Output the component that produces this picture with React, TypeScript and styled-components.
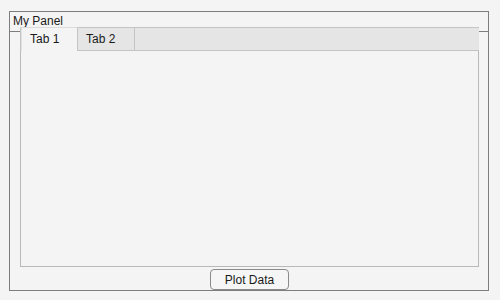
import React, {useState} from "react";
import styled, {createGlobalStyle} from "styled-components";

const GlobalStyle = createGlobalStyle`
    html, body {
        margin: 0;
        padding: 0;
        background: #f4f4f4;
        font-family: "Liberation Sans", Arial, sans-serif;
        font-size: 12px;
        color: #1a1a1a;
    }
`;

const Page = styled.div`
    width: 500px;
    height: 300px;
    padding: 11px 0 0 9px;
    box-sizing: border-box;
`;

const Panel = styled.div`
    width: 480px;
    height: 280px;
    box-sizing: border-box;
    border: 1px solid #7d7d7d;
    display: flex;
    flex-direction: column;
`;

const PanelTitle = styled.div`
    height: 19px;
    line-height: 18px;
    padding-left: 3px;
    border-bottom: 1px solid #7d7d7d;
`;

const TabGroup = styled.div`
    position: relative;
    margin: -5px 0 0 10px;
    width: 459px;
    height: 240px;
    box-sizing: border-box;
    border: 1px solid #b9b9b9;
    border-top: none;
    background: #f4f4f4;
    display: flex;
    flex-direction: column;
`;

const TabStrip = styled.div`
    display: flex;
    height: 24px;
    box-sizing: border-box;
    background: #e5e5e5;
    border-top: 1px solid #c4c4c4;
    border-bottom: 1px solid #c4c4c4;
    margin: 0 -1px 0 -1px;
    padding-left: 1px;
`;

const Tab = styled.div<{ $active: boolean }>`
    width: ${p => p.$active ? '58px' : '57px'};
    box-sizing: border-box;
    margin-top: -1px;
    margin-bottom: ${p => p.$active ? '-1px' : '0'};
    margin-left: ${p => p.$active ? '-1px' : '0'};
    padding: ${p => p.$active ? '4px 0 0 9px' : '4px 0 0 8px'};
    background: ${p => p.$active ? '#f4f4f4' : '#e5e5e5'};
    border-top: 1px solid ${p => p.$active ? '#dcdcdc' : '#c4c4c4'};
    border-right: 1px solid #c4c4c4;
    border-left: ${p => p.$active ? '1px solid #c4c4c4' : 'none'};
    box-shadow: ${p => p.$active ? 'inset 1px 0 0 #e2e2e2' : 'none'};
    line-height: 14px;
    cursor: default;
`;

const TabBody = styled.div`
    flex: 1;
`;

const ButtonRow = styled.div`
    display: flex;
    justify-content: center;
    margin-top: 2px;
`;

const Button = styled.button`
    width: 79px;
    height: 21px;
    box-sizing: border-box;
    border: 1px solid #8a8a8a;
    border-radius: 4px;
    background: #f6f6f6;
    font-family: "Liberation Sans", Arial, sans-serif;
    font-size: 12px;
    color: #1a1a1a;
    padding: 0;
    margin-left: 1px;
`;

export default function App() {
    const [tab, setTab] = useState(0);
    const tabs = ['Tab 1', 'Tab 2'];
    return (
        <Page>
            <GlobalStyle/>
            <Panel>
                <PanelTitle>My Panel</PanelTitle>
                <TabGroup>
                    <TabStrip>
                        {tabs.map((t, i) =>
                            <Tab key={t} $active={i === tab} onClick={() => setTab(i)}>{t}</Tab>
                        )}
                    </TabStrip>
                    <TabBody/>
                </TabGroup>
                <ButtonRow>
                    <Button>Plot Data</Button>
                </ButtonRow>
            </Panel>
        </Page>
    )
}
